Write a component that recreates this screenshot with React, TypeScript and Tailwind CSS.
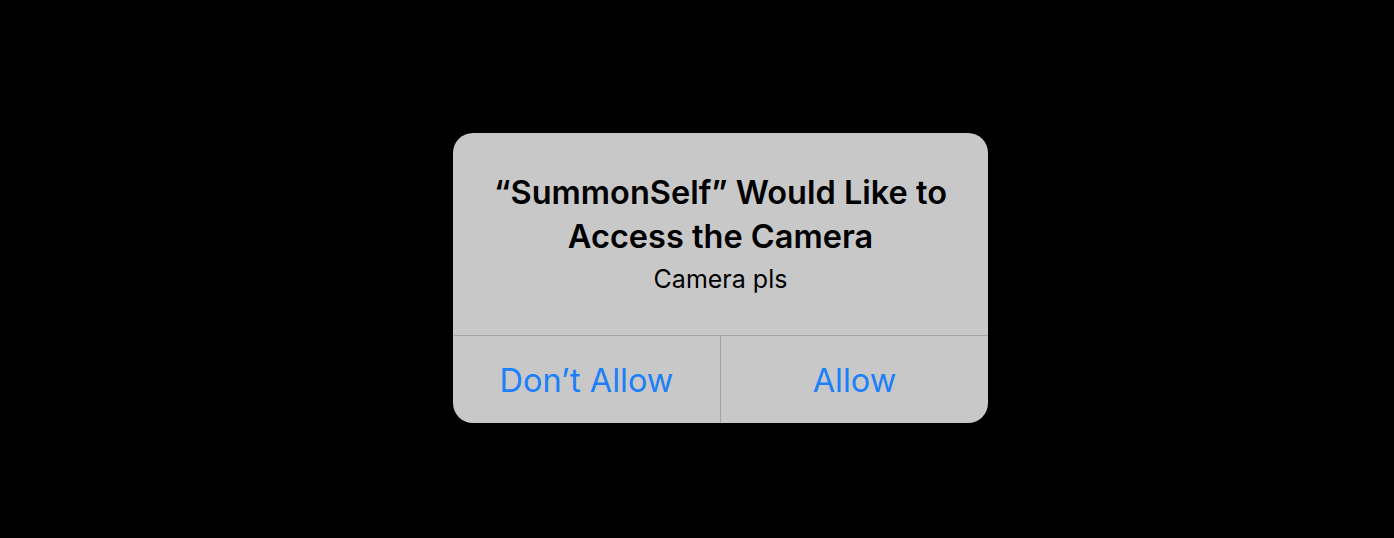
import React from "react";

export default function App() {
  return (
    <div
      className="w-[1394px] h-[538px] bg-black pl-[453px] pt-[133px]"
      style={{ fontFamily: "Inter, 'Liberation Sans', sans-serif" }}
    >
      <div className="w-[535px] h-[290px] bg-[#c8c8c8] rounded-[20px] flex flex-col overflow-hidden">
        {/* Message */}
        <div className="h-[202px] flex flex-col items-center pt-[38px] text-black text-center">
          <h1 className="text-[32.5px] leading-[44px] font-semibold">
            “SummonSelf” Would Like to
            <br />
            Access the Camera
          </h1>
          <p className="text-[25px] leading-[32px] mt-[4px]">Camera pls</p>
        </div>

        {/* Actions */}
        <div className="flex-1 flex border-t border-[#a4a4a4]">
          <button className="flex-1 pt-[4px] text-[32.5px] text-[#1b80fa] border-r border-[#a4a4a4]">
            Don’t Allow
          </button>
          <button className="flex-1 pt-[4px] text-[32.5px] text-[#1b80fa]">Allow</button>
        </div>
      </div>
    </div>
  );
}
